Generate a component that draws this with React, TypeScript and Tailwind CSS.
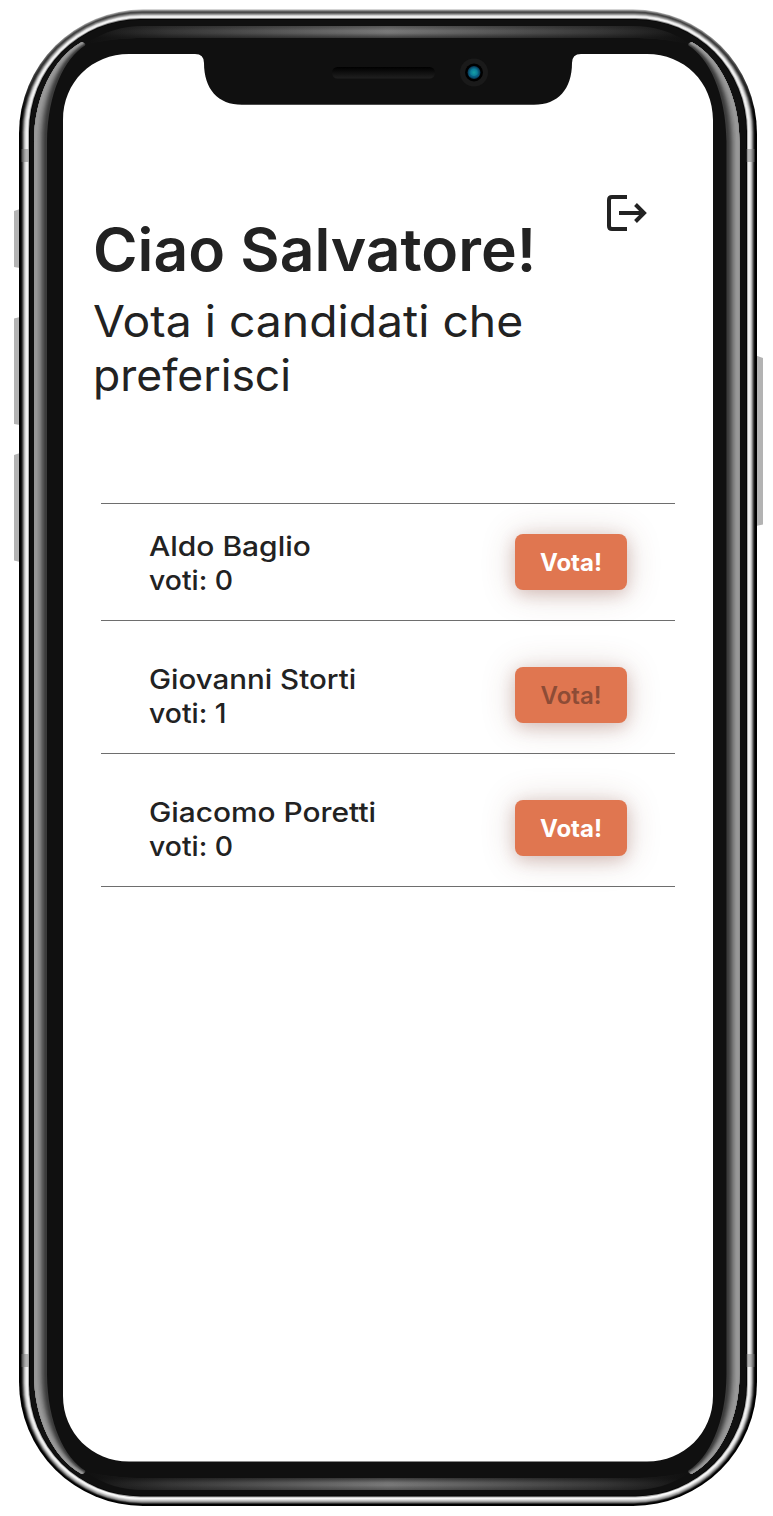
const candidates = [
  { name: 'Aldo Baglio', votes: 0, disabled: false, stretch: 'scale-x-[1.11]' },
  { name: 'Giovanni Storti', votes: 1, disabled: true, stretch: 'scale-x-[1.093]' },
  { name: 'Giacomo Poretti', votes: 0, disabled: false, stretch: 'scale-x-[1.106]' },
];

/* Metal rim, from the outside in: [inset, side, top, bottom] */
const rim: [number, string, string, string][] = [
  [0, '#000', '#a8a8a8', '#000'],
  [1, '#000', '#777', '#000'],
  [2, '#141414', '#444', '#222'],
  [3, '#444', '#4c4c4c', '#666'],
  [4, '#808080', '#777', '#999'],
  [5, '#b8b8b8', '#a8a8a8', '#bbb'],
  [6, '#dcdcdc', '#ddd', '#ddd'],
  [7, '#f0f0f0', '#f4f4f4', '#f4f4f4'],
  [8, '#f0f0f0', '#eee', '#fff'],
  [9, '#b0b0b0', '#888', '#aaa'],
  [10, '#050505', '#050505', '#050505'],
  [11, '#101010', '#101010', '#101010'],
];

const lerp = (a: number, b: number, t: number) => a + (b - a) * t;

const shine = (t: number) => {
  const p = (ox: number, oy: number, ix: number, iy: number) =>
    `${lerp(ox, ix, t).toFixed(2)} ${lerp(oy, iy, t).toFixed(2)}`;
  const m = (ox: number, oy: number, ix: number, iy: number) =>
    `${lerp(ox, ix, t).toFixed(2)} ${(1516 - lerp(oy, iy, t)).toFixed(2)}`;
  return `M${p(81, 42.5, 85, 45.5)} Q${p(83, 41.5, 86.5, 42.5)} 81 42.5 C53 58 34 98 34 142 V1374 C34 1418 53 1458 81 1473.500 Q${m(83, 41.5, 86.5, 42.5)} ${m(81, 42.5, 85, 45.5)} C${m(53, 58, 65, 58)} ${m(34, 98, 47.5, 92)} ${m(34, 142, 47, 142)} L${p(34, 142, 47, 142)} C${p(34, 98, 47.5, 92)} ${p(53, 58, 65, 58)} ${p(81, 42.5, 85, 45.5)} Z`;
};

const shineLayers: [number, string][] = [
  [1, '#3c3c3c'],
  [0.85, '#454545'],
  [0.77, '#505050'],
  [0.7, '#5b5b5b'],
  [0.62, '#6a6a6a'],
  [0.54, '#797979'],
  [0.45, '#868686'],
  [0.35, '#909090'],
  [0.25, '#989898'],
];

const glowPath =
  'M86 44 C105 31 122 26 145 26 H631 C654 26 671 31 690 44 C668 40 655 38 631 38 H145 C121 38 108 40 86 44 Z';

function TopGlow() {
  return (
    <g>
      <path d={glowPath} fill="url(#glow-x)" />
      <path d={glowPath} fill="url(#glow-y)" />
    </g>
  );
}

function PhoneFrame() {
  return (
    <svg className="absolute inset-0" width="773" height="1516" viewBox="0 0 773 1516" aria-hidden="true">
      <defs>
        {rim.map(([i, side, top, bottom]) => (
          <linearGradient key={i} id={`rim-${i}`} gradientUnits="userSpaceOnUse" x1="0" y1="10" x2="0" y2="1506">
            <stop offset="0.006" stopColor={top} />
            <stop offset="0.07" stopColor={side} />
            <stop offset="0.95" stopColor={side} />
            <stop offset="1" stopColor={bottom} />
          </linearGradient>
        ))}
        <linearGradient id="glow-x">
          <stop offset="0" stopColor="#101010" />
          <stop offset="0.05" stopColor="#1f1f1f" />
          <stop offset="0.14" stopColor="#363636" />
          <stop offset="0.5" stopColor="#7a7a7a" />
          <stop offset="0.86" stopColor="#363636" />
          <stop offset="0.95" stopColor="#1f1f1f" />
          <stop offset="1" stopColor="#101010" />
        </linearGradient>
        <linearGradient id="glow-y" gradientUnits="userSpaceOnUse" x1="0" y1="26" x2="0" y2="38">
          <stop offset="0" stopColor="#101010" stopOpacity="0.35" />
          <stop offset="0.4" stopColor="#101010" stopOpacity="0" />
          <stop offset="0.6" stopColor="#101010" stopOpacity="0.05" />
          <stop offset="1" stopColor="#101010" stopOpacity="0.6" />
        </linearGradient>
        <linearGradient id="speaker" x1="0" y1="0" x2="0" y2="1">
          <stop offset="0" stopColor="#000" />
          <stop offset="1" stopColor="#202020" />
        </linearGradient>
        <radialGradient id="lens">
          <stop offset="0" stopColor="#16a0a4" />
          <stop offset="0.5" stopColor="#0b7f9b" />
          <stop offset="1" stopColor="#07304f" />
        </radialGradient>
      </defs>

      <g fill="#b3b3b3">
        <path d="M20 209 L14 211 V267 L20 268 Z" />
        <path d="M20 317 L14 318.500 V424 L20 425 Z" />
        <path d="M20 453 L14 455 V560.500 L20 562 Z" />
        <path d="M756 355.500 L763 358 V524.500 L756 526 Z" />
      </g>

      {rim.map(([i]) => (
        <rect
          key={i}
          x={19 + i}
          y={9.5 + i * 0.95}
          width={738 - 2 * i}
          height={1496.5 - 1.9 * i}
          rx={124 - i * 1.25}
          ry={124 - i * 1.2}
          fill={`url(#rim-${i})`}
        />
      ))}

      <g fill="#777" fillOpacity="0.5">
        <rect x="21.500" y="149" width="7" height="13" />
        <rect x="746.500" y="149" width="8" height="13" />
        <rect x="21.500" y="1354" width="7" height="13" />
        <rect x="746.500" y="1354" width="8" height="13" />
      </g>

      <TopGlow />
      <g transform="matrix(1 0 0 -1 0 1516)">
        <TopGlow />
      </g>

      {shineLayers.map(([t, color]) => (
        <g key={t} fill={color}>
          <path d={shine(t)} />
          <path d={shine(t)} transform="matrix(-1 0 0 1 773.500 0)" />
        </g>
      ))}

      <path
        d="M129 54 H195 Q204 54 204 63 C204 89 218 104.800 242 104.800 H534 C558 104.800 572 89 572 63 Q572 54 581 54 H647 C684 54 713 82 713 120 V1396 C713 1433 684 1461.500 647 1461.500 H129 C92 1461.500 63 1433 63 1396 V120 C63 82 92 54 129 54 Z"
        fill="#fff"
      />

      <rect x="332" y="67" width="103" height="11.500" rx="5.500" fill="url(#speaker)" />
      <circle cx="474" cy="72.500" r="14" fill="#1a1a1a" />
      <circle cx="474" cy="72.500" r="9" fill="#000" />
      <circle cx="474" cy="72.500" r="6.500" fill="url(#lens)" />
      <path d="M469 75.500 Q474 78 479 75.500" stroke="#0a5c86" fill="none" />
    </svg>
  );
}

function LogoutIcon() {
  return (
    <svg width="42" height="38" viewBox="0 0 42 38" fill="none" stroke="#222" strokeWidth="4" aria-hidden="true">
      <path d="M21 3 H6 Q3 3 3 6 V32 Q3 35 6 35 H21" />
      <path d="M13 19 H38 M29.500 10.500 L38 19 L29.500 27.500" />
    </svg>
  );
}

export default function App() {
  return (
    <div className="relative h-[1516px] w-[773px] overflow-hidden bg-white font-['Inter','Liberation_Sans',sans-serif] text-[#222]">
      <PhoneFrame />
      <main className="relative flex flex-col pl-[93px] pr-[98px] pt-[194px]">
        <header>
          <div className="flex h-[20px] justify-end pr-[27px]">
            <button aria-label="Esci" className="h-[38px]">
              <LogoutIcon />
            </button>
          </div>
          <h1 className="origin-left scale-x-[1.026] whitespace-nowrap text-[59px] font-semibold leading-[72px]">
            Ciao Salvatore!
          </h1>
          <p className="mt-[8px] whitespace-nowrap text-[43.5px] leading-[54px]">
            <span className="block origin-left scale-x-[1.064]">Vota i candidati che</span>
            <span className="block origin-left scale-x-[1.022]">preferisci</span>
          </p>
        </header>
        <ul className="ml-[8px] mt-[101px] flex flex-col gap-4 border-t border-[#6e6e6e]">
          {candidates.map((c) => (
            <li
              key={c.name}
              className="flex h-[117px] items-center justify-between border-b border-[#6e6e6e] pl-12 pr-12"
            >
              <div className="whitespace-nowrap pt-[3px] text-[27px] font-medium leading-[34px]">
                <p className={`origin-left ${c.stretch}`}>{c.name}</p>
                <p className="origin-left scale-x-[1.05]">voti: {c.votes}</p>
              </div>
              <button
                disabled={c.disabled}
                className="h-14 w-28 rounded-lg bg-[#e07650] pt-0.5 text-2xl font-bold text-white shadow-[0_4px_16px_rgba(130,50,35,0.22),0_2px_34px_rgba(110,60,40,0.22)] disabled:font-semibold disabled:text-[#8d4c36]"
              >
                Vota!
              </button>
            </li>
          ))}
        </ul>
      </main>
    </div>
  );
}
